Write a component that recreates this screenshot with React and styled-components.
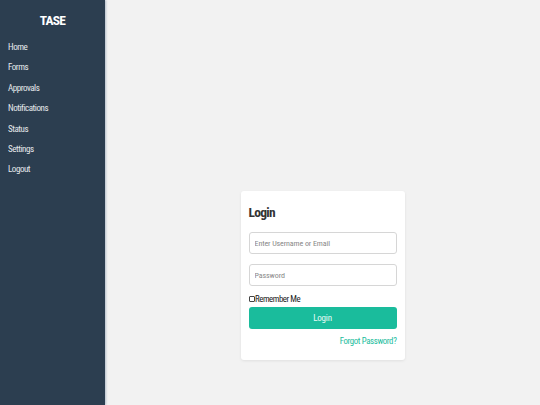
import React from "react";
import styled, { createGlobalStyle } from "styled-components";

const GlobalStyle = createGlobalStyle`
  html, body { margin: 0; padding: 0; }
  body {
    font-family: "Roboto Condensed", Roboto, "Liberation Sans", sans-serif;
    background: #f2f2f2;
  }
  * { box-sizing: border-box; }
`;

const Layout = styled.div`
  display: flex;
  width: 540px;
  height: 405px;
  overflow: hidden;
`;

const Sidebar = styled.nav`
  width: 105px;
  flex: 0 0 105px;
  background: #2c3e50;
  color: #fff;
  display: flex;
  flex-direction: column;
  box-shadow: 1px 0 2px rgba(60, 90, 130, 0.35);
  position: relative;
  z-index: 1;
`;

const Brand = styled.h1`
  margin: 0;
  padding: 11px 0 8px;
  text-align: center;
  font-size: 13.5px;
  font-weight: 700;
  line-height: 18px;
  letter-spacing: -0.8px;
`;

const NavList = styled.ul`
  list-style: none;
  margin: 0;
  padding: 0;
  display: flex;
  flex-direction: column;
`;

const NavItem = styled.li`
  padding: 0 8px;
  height: 20.4px;
  line-height: 20.4px;
  font-size: 9px;
  letter-spacing: -0.45px;
  color: #e6e9ec;
`;

const Main = styled.main`
  flex: 1;
  background: #f2f2f2;
  display: flex;
  justify-content: center;
  align-items: flex-start;
  padding-top: 191px;
`;

const Card = styled.div`
  width: 164px;
  background: #fff;
  border-radius: 3px;
  box-shadow: 0 1px 3px rgba(0, 0, 0, 0.08);
  padding: 10px 8px 13px;
  display: flex;
  flex-direction: column;
`;

const Title = styled.h2`
  margin: 0 0 9px;
  font-size: 13.5px;
  font-weight: 700;
  line-height: 22px;
  letter-spacing: -0.7px;
  color: #333;
`;

const Input = styled.input`
  width: 100%;
  height: 22px;
  border: 1px solid #d6d6d6;
  border-radius: 3px;
  padding: 0 5px;
  font-family: inherit;
  font-size: 8px;
  letter-spacing: -0.1px;
  color: #333;
  margin-bottom: ${p => p.$mb}px;
  outline: none;
  &::placeholder { color: #888; }
`;

const CheckRow = styled.label`
  display: flex;
  align-items: center;
  font-size: 8.8px;
  letter-spacing: -0.45px;
  color: #222;
  height: 10px;
  margin-bottom: 3px;
`;

const Check = styled.input`
  width: 6px;
  height: 6px;
  margin: 0 0.5px 0 0;
  appearance: none;
  border: 1px solid #444;
  border-radius: 1px;
  background: #fff;
`;

const Button = styled.button`
  width: 100%;
  height: 22px;
  border: none;
  border-radius: 3px;
  background: #1abc9c;
  color: #e8fbf6;
  font-family: inherit;
  font-size: 9px;
  letter-spacing: -0.2px;
  margin-bottom: 6px;
`;

const Forgot = styled.a`
  align-self: flex-end;
  font-size: 8.8px;
  letter-spacing: -0.35px;
  line-height: 12px;
  color: #1abc9c;
  text-decoration: none;
`;

const links = ["Home", "Forms", "Approvals", "Notifications", "Status", "Settings", "Logout"];

export default function App() {
  return (
    <Layout>
      <GlobalStyle />
      <Sidebar>
        <Brand>TASE</Brand>
        <NavList>
          {links.map(l => <NavItem key={l}>{l}</NavItem>)}
        </NavList>
      </Sidebar>
      <Main>
        <Card>
          <Title>Login</Title>
          <Input $mb={10} placeholder="Enter Username or Email" />
          <Input $mb={8} type="password" placeholder="Password" />
          <CheckRow><Check type="checkbox" />Remember Me</CheckRow>
          <Button>Login</Button>
          <Forgot href="#">Forgot Password?</Forgot>
        </Card>
      </Main>
    </Layout>
  );
}
